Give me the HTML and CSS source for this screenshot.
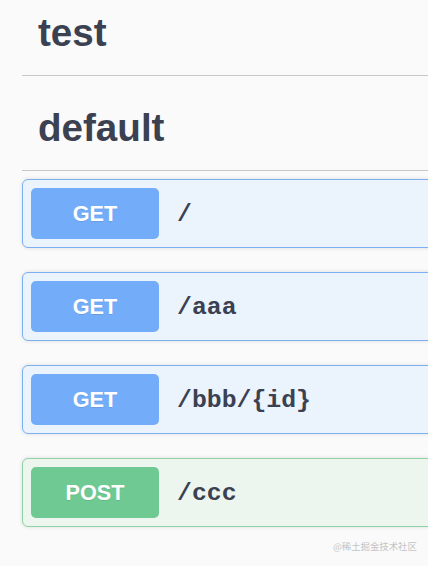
FILE: index.html
```html
<!DOCTYPE html>
<html lang="en">
<head>
<meta charset="utf-8">
<title>Swagger</title>
<link rel="stylesheet" href="styles.css">
</head>
<body>
<div class="wrap">
  <h3 class="tag">test</h3>
  <h3 class="tag">default</h3>
  <div class="op op-get"><span class="method">GET</span><span class="path">/</span></div>
  <div class="op op-get"><span class="method">GET</span><span class="path">/aaa</span></div>
  <div class="op op-get"><span class="method">GET</span><span class="path">/bbb/{id}</span></div>
  <div class="op op-post"><span class="method">POST</span><span class="path">/ccc</span></div>
</div>
<div class="watermark">@稀土掘金技术社区</div>
</body>
</html>
```
FILE: styles.css
```css
html, body {
  margin: 0;
  padding: 0;
  background: #fafafa;
  overflow: hidden;
  height: 566px;
}
body {
  font-family: "Liberation Sans", Arial, sans-serif;
  color: #3b4151;
  position: relative;
}
.wrap {
  margin: -11px 0 0 22px;
  width: 700px;
}
.tag {
  margin: 0 0 8px;
  padding: 22px 0 20px 16px;
  font-size: 38.6px;
  line-height: 44px;
  font-weight: bold;
  color: #3b4151;
  border-bottom: 1px solid #c6c7cb;
}
.op {
  display: flex;
  align-items: center;
  padding: 8px;
  margin-bottom: 24px;
  border: 1px solid;
  border-radius: 6px;
  box-shadow: 0 0 4px rgba(0, 0, 0, 0.12);
}
.op-get {
  background: #ebf3fc;
  border-color: #7cb0f2;
}
.op-post {
  background: #ecf6ef;
  border-color: #8fd3a5;
}
.method {
  width: 128px;
  height: 51px;
  display: flex;
  align-items: center;
  justify-content: center;
  border-radius: 5px;
  color: #fff;
  font-size: 21.6px;
  font-weight: bold;
  text-shadow: 0 1px 0 rgba(0, 0, 0, 0.1);
}
.op-get .method { background: #73adf9; }
.op-post .method { background: #6fc993; }
.path {
  padding-left: 18px;
  font-family: "Liberation Mono", "Courier New", monospace;
  font-weight: bold;
  font-size: 24.8px;
  color: #3b4151;
}
.watermark {
  position: absolute;
  left: 333px;
  top: 539px;
  font-family: "Noto Sans CJK SC", sans-serif;
  font-size: 9.4px;
  color: #c4c4c4;
  line-height: 14px;
}
```
